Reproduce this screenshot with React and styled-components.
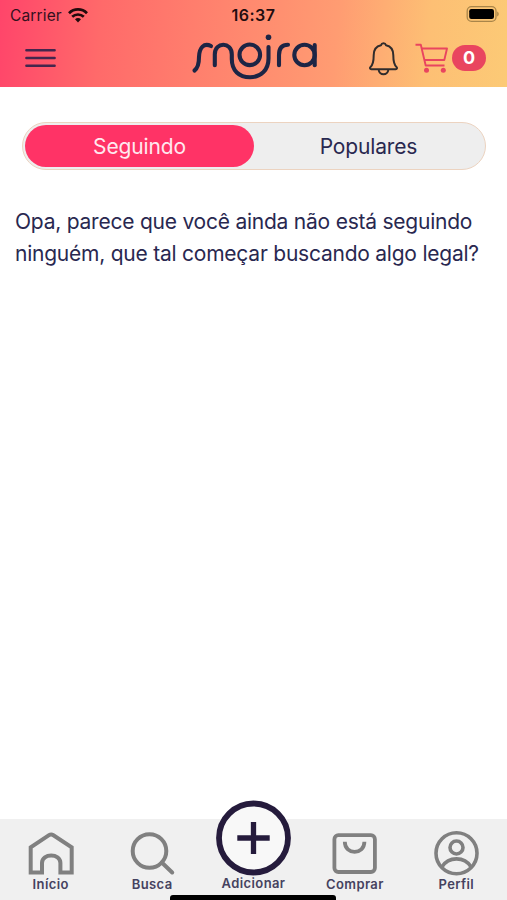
import React, {useState} from 'react'
import styled, {createGlobalStyle} from 'styled-components'

const navy = '#292850'
const grey = '#808080'

const GlobalStyle = createGlobalStyle`
  body {
    margin: 0;
    background: #fff;
    font-family: Inter, 'Liberation Sans', sans-serif;
  }
  button {
    padding: 0;
    border: 0;
    background: none;
    font-family: inherit;
    cursor: pointer;
  }
  svg {
    display: block;
    overflow: visible;
  }
`

const Screen = styled.div`
  display: flex;
  flex-direction: column;
  height: 900px;
  overflow: hidden;
`

const Header = styled.header`
  height: 87px;
  background: linear-gradient(
    95deg,
    #ff456a 0%,
    #ff6a6a 20%,
    #ff7e6d 38%,
    #ff9c72 66%,
    #fdbf74 84%,
    #fcca76 100%
  );
`

const StatusBar = styled.div`
  display: grid;
  grid-template-columns: 1fr auto 1fr;
  align-items: center;
  height: 30px;
  padding: 0 8px 0 10px;
`

const Carrier = styled.div`
  display: flex;
  align-items: center;
  gap: 6px;
  color: #35101d;
  font-size: 15.5px;
  letter-spacing: 0.15px;
`

const Clock = styled.div`
  margin-right: 2px;
  color: #1f0d10;
  font-size: 16px;
  font-weight: 600;
  letter-spacing: 0.5px;
`

const Battery = styled.svg`
  justify-self: end;
  margin-top: -2px;
`

const TitleBar = styled.div`
  display: grid;
  grid-template-columns: 1fr auto 1fr;
  align-items: center;
  height: 57px;
  padding: 0 21px 0 25px;
`

const Wordmark = styled.svg`
  margin: -3px 3px 0 0;
`

const MenuButton = styled.button`
  justify-self: start;
  margin-top: -1px;
`

const Actions = styled.div`
  display: flex;
  align-items: center;
  justify-content: flex-end;
`

const CartButton = styled.button`
  display: flex;
  align-items: center;
  gap: 4px;
  margin: -2px 0 0 17px;
`

const CartCount = styled.span`
  width: 34px;
  height: 26px;
  border-radius: 13px;
  background: #e9455f;
  color: #fff;
  font-size: 18px;
  font-weight: 700;
  line-height: 26px;
  text-align: center;
`

const Content = styled.main`
  flex: 1;
  padding: 35px 15px 0;
`

const Switch = styled.div`
  display: flex;
  box-sizing: border-box;
  height: 48px;
  margin: 0 6px 0 7px;
  padding: 2px;
  border: 1px solid #ecd3c0;
  border-radius: 24px;
  background: #eeeeee;
`

const SwitchOption = styled.button`
  flex: 1;
  border-radius: 21px;
  background: ${props => (props.$active ? '#ff3366' : 'transparent')};
  color: ${props => (props.$active ? '#ffe9ef' : navy)};
  font-size: 21px;
  letter-spacing: -0.15px;
`

const Message = styled.p`
  margin: 36px -10px 0 0;
  color: ${navy};
  font-size: 21px;
  line-height: 32px;
  letter-spacing: -0.23px;
  white-space: pre-line;
`

const TabBar = styled.nav`
  position: relative;
  display: grid;
  grid-template-columns: repeat(5, 1fr);
  height: 81px;
  background: #f0f0f0;
`

const Tab = styled.button`
  display: flex;
  flex-direction: column;
  align-items: center;
  justify-content: flex-end;
  gap: ${props => (props.$raised ? 0 : 1)}px;
  height: ${props => (props.$raised ? 72 : 73)}px;
  color: #45425f;
  font-size: 13px;
  font-weight: 600;
  line-height: 16px;
  letter-spacing: 0.4px;
`

const HomeIndicator = styled.div`
  position: absolute;
  bottom: 0;
  left: 170px;
  width: 166px;
  height: 5px;
  border-radius: 3px 3px 0 0;
  background: #000;
`

const WifiIcon = () => (
  <svg width="20" height="15" viewBox="0 0 20 15" fill="none" stroke="#210a0c" strokeWidth="2.7">
    <path d="M1 5.2C6 .2 14 .2 19 5.2" />
    <path d="M4.2 8.8c3.3-3.1 8.3-3.1 11.6 0" />
    <path d="M7 11.2c1.7-1.5 4.3-1.5 6 0L10 14.5z" fill="#210a0c" stroke="none" />
  </svg>
)

const BatteryIcon = () => (
  <Battery width="33" height="16" viewBox="0 0 33 16">
    <rect x="1.2" y=".7" width="28.8" height="14.6" rx="4.3" fill="none" stroke="#a98549" strokeWidth="1.3" />
    <rect x="3.200" y="3" width="24.8" height="10" rx="2.2" />
    <path d="M31.200 5.500c2 .8 2 4.200 0 5z" fill="#a98549" />
  </Battery>
)

const MenuIcon = () => (
  <svg width="31" height="20" viewBox="0 0 31 20" stroke="#44264d" strokeWidth="2.5" strokeLinecap="round">
    <path d="M1.4 2.2h28.2M1.4 10h28.2M1.4 17.8h28.2" />
  </svg>
)

// joined wordmark: one line runs under the ring and rises to the dotted stem
const Logo = () => (
  <Wordmark
    width="125"
    height="46"
    viewBox="191.5 34 125 46"
    fill="none"
    stroke="#1d2545"
    strokeWidth="4.1"
    strokeLinecap="round"
    role="img"
    aria-label="mojra"
  >
    <path d="M194 70.5C198 67.500 198.500 62.500 198.500 57C198.800 47.500 203.500 42.500 210.500 46" />
    <path d="M214.300 65.300V54.500C214.300 41.500 231.300 41.500 231.300 54.500V59C231.300 70.500 238.500 77.200 249.500 77.200S268 70 268 58.500V47" />
    <circle cx="249.300" cy="54.800" r="10.300" />
    <circle cx="268" cy="37.300" r="2.800" fill="#1d2545" stroke="none" />
    <path d="M278.500 65.300V55C278.500 48 281.500 44.700 287.500 44.700" />
    <circle cx="304" cy="55" r="10.200" />
    <path d="M314.200 45V65.300" />
  </Wordmark>
)

const BellIcon = () => (
  <svg width="29" height="34" viewBox="0 0 29 34" fill="none" stroke="#302c2c" strokeWidth="2" strokeLinejoin="round">
    <path d="M12 3.2a2.600 2.600 0 0 1 5 0c5 1 7.300 5 7.300 10 0 6 .7 9.500 3.200 11.700 1 .9.500 2.300-.8 2.300H2.300c-1.300 0-1.800-1.400-.8-2.300 2.500-2.200 3.200-5.700 3.200-11.700 0-5 2.300-9 7.300-10z" />
    <path d="M9.600 27.300c.4 6.700 9.400 6.700 9.800 0" />
  </svg>
)

const CartIcon = () => (
  <svg width="33" height="30" viewBox="0 0 33 30" fill="none" stroke="#e9455f" strokeWidth="1.9" strokeLinejoin="round">
    <path d="M.5 1.700h5.300l4.900 20.800h18.800" />
    <path d="M6.700 5.500H32l-2.700 11.500H9.400" />
    <circle cx="11.500" cy="27.300" r="2.500" fill="#e9455f" stroke="none" />
    <circle cx="28.300" cy="27.300" r="2.500" fill="#e9455f" stroke="none" />
  </svg>
)

const HomeIcon = () => (
  <svg width="45" height="43" viewBox="-0.2 0 45 43" fill="none" stroke={grey} strokeWidth="4">
    <path d="M2.500 40.500V15.300L20.800 3.200q2.200-1.400 4.400 0L43.500 15.300V40.500H32.200V31c0-10-18.400-10-18.400 0v9.500z" />
  </svg>
)

const SearchIcon = () => (
  <svg width="45" height="43" viewBox="0 0 45 43" fill="none" stroke={grey} strokeWidth="4" strokeLinecap="round">
    <circle cx="19.500" cy="19" r="16.800" />
    <path d="M31.800 30.500l10.400 10" />
  </svg>
)

const AddIcon = () => (
  <svg width="75" height="75" viewBox="0 0 75 75" fill="none" stroke="#251b3c">
    <circle cx="37.500" cy="38" r="34.500" fill="#f8f8f8" strokeWidth="5.800" />
    <path d="M37.500 22v32M21.300 38h32.400" strokeWidth="5.300" />
  </svg>
)

const BagIcon = () => (
  <svg width="45" height="43" viewBox="0 0 45 43" fill="none" stroke={grey} strokeWidth="3.800">
    <rect x="2.400" y="3.200" width="40.500" height="36.800" rx="4" />
    <path d="M12.800 9.800c0 13.500 19.600 13.500 19.600 0" />
  </svg>
)

const ProfileIcon = () => (
  <svg width="46" height="44" viewBox="-0.5 0 46 44" fill="none" stroke={grey} strokeWidth="3.600">
    <circle cx="23" cy="22.300" r="20.500" />
    <circle cx="23" cy="16.500" r="6.500" />
    <path d="M8.500 35.800c6.500-10.600 22.500-10.600 29 0" />
  </svg>
)

const tabs = [
  {label: 'Início', Icon: HomeIcon},
  {label: 'Busca', Icon: SearchIcon},
  {label: 'Adicionar', Icon: AddIcon, raised: true},
  {label: 'Comprar', Icon: BagIcon},
  {label: 'Perfil', Icon: ProfileIcon}
]

const feeds = ['Seguindo', 'Populares']

const App = () => {
  const [feed, setFeed] = useState('Seguindo')

  return (
    <Screen>
      <GlobalStyle />
      <Header>
        <StatusBar>
          <Carrier>
            Carrier
            <WifiIcon />
          </Carrier>
          <Clock>16:37</Clock>
          <BatteryIcon />
        </StatusBar>
        <TitleBar>
          <MenuButton aria-label="Menu">
            <MenuIcon />
          </MenuButton>
          <Logo />
          <Actions>
            <BellIcon />
            <CartButton>
              <CartIcon />
              <CartCount>0</CartCount>
            </CartButton>
          </Actions>
        </TitleBar>
      </Header>
      <Content>
        <Switch>
          {feeds.map(name => (
            <SwitchOption key={name} $active={name === feed} onClick={() => setFeed(name)}>
              {name}
            </SwitchOption>
          ))}
        </Switch>
        <Message>
          {'Opa, parece que você ainda não está seguindo\nninguém, que tal começar buscando algo legal?'}
        </Message>
      </Content>
      <TabBar>
        {tabs.map(({label, Icon, raised}) => (
          <Tab key={label} $raised={raised}>
            <Icon />
            {label}
          </Tab>
        ))}
        <HomeIndicator />
      </TabBar>
    </Screen>
  )
}

export default App
